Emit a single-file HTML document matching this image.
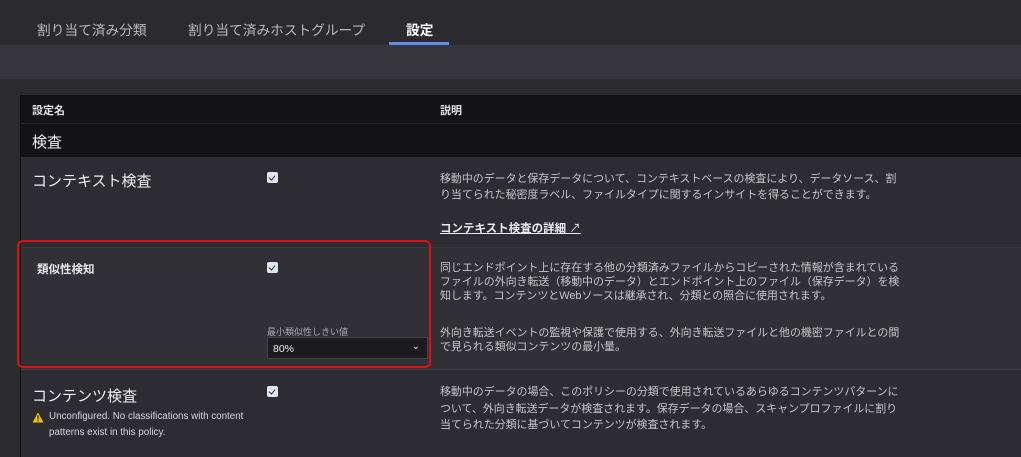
<!DOCTYPE html>
<html><head><meta charset="utf-8"><style>
*{margin:0;padding:0;box-sizing:border-box}
body{width:1021px;height:457px;overflow:hidden;background:#2a2a2f;font-family:"Liberation Sans","Noto Sans CJK JP",sans-serif;color:#d8d8dc;position:relative}
.a{position:absolute;white-space:nowrap}
.tab{font-size:13.7px;color:#b8b8bc;top:19px}
.cb{position:absolute;width:11px;height:11px;background:#dfe6f5;border-radius:2px}
.cb:after{content:"";position:absolute;left:3px;top:2px;width:3px;height:5px;border:solid #2a2a30;border-width:0 1.5px 1.5px 0;transform:rotate(40deg)}
.d{font-size:10.95px;color:#c6c6ca;line-height:16px;white-space:nowrap}
</style></head><body>
<div class="a" style="left:0;top:0;width:1021px;height:45px;background:#2a2a2f"></div>
<div class="a tab" style="left:37px">割り当て済み分類</div>
<div class="a tab" style="left:188px">割り当て済みホストグループ</div>
<div class="a tab" style="left:406px;color:#fff;font-weight:bold">設定</div>
<div class="a" style="left:389px;top:42px;width:60px;height:3px;background:#5b8ef0"></div>
<div class="a" style="left:0;top:45px;width:1021px;height:34px;background:#37363c"></div>
<div class="a" style="left:20px;top:95px;width:1001px;height:62px;background:#131217"></div>
<div class="a" style="left:20px;top:123px;width:1001px;height:1px;background:#26252b"></div>
<div class="a" style="left:32px;top:102px;font-size:11px;color:#e0e0e4;font-weight:bold">設定名</div>
<div class="a" style="left:440px;top:102px;font-size:11px;color:#e0e0e4;font-weight:bold">説明</div>
<div class="a" style="left:32px;top:131px;font-size:15px;color:#eee">検査</div>
<div class="a" style="left:20px;top:157px;width:1001px;height:90px;background:#2d2c32"></div>
<div class="a" style="left:20px;top:247px;width:1001px;height:123px;background:#313036;border-top:1px solid #3a393f;border-bottom:1px solid #444349"></div>
<div class="a" style="left:20px;top:370px;width:1001px;height:87px;background:#2d2c32"></div>
<div class="a" style="left:20px;top:95px;width:1px;height:362px;background:#111"></div>
<div class="a" style="left:32px;top:170px;font-size:15px;color:#eee">コンテキスト検査</div>
<div class="cb" style="left:267px;top:172px"></div>
<div class="a d" style="left:440px;top:171px">移動中のデータと保存データについて、コンテキストベースの検査により、データソース、割<br>り当てられた秘密度ラベル、ファイルタイプに関するインサイトを得ることができます。</div>
<div class="a" style="left:440px;top:220px;font-size:11.5px;color:#e8eaf8;font-weight:bold;text-decoration:underline">コンテキスト検査の詳細 <span style="font-weight:normal">↗</span></div>
<div class="a" style="left:37px;top:261px;font-size:11.5px;color:#e8e8ec;font-weight:bold">類似性検知</div>
<div class="cb" style="left:267px;top:262px"></div>
<div class="a" style="left:267px;top:325px;font-size:9px;color:#a8a8ac">最小類似性しきい値</div>
<div class="a" style="left:267px;top:337px;width:161px;height:22px;background:#1c1b20;border:1px solid #444;font-size:10.5px;color:#e8e8ec;padding:5px 5px">80%<span style="position:absolute;right:7px;top:3px;font-size:10px">⌄</span></div>
<div class="a d" style="left:440px;top:261px;line-height:14px">同じエンドポイント上に存在する他の分類済みファイルからコピーされた情報が含まれている<br>ファイルの外向き転送（移動中のデータ）とエンドポイント上のファイル（保存データ）を検<br>知します。コンテンツとWebソースは継承され、分類との照合に使用されます。</div>
<div class="a d" style="left:440px;top:326px;line-height:14px">外向き転送イベントの監視や保護で使用する、外向き転送ファイルと他の機密ファイルとの間<br>で見られる類似コンテンツの最小量。</div>
<div class="a" style="left:17px;top:240px;width:414px;height:128px;border:2px solid #d11;border-radius:6px"></div>
<div class="a" style="left:32px;top:385px;font-size:15px;color:#eee">コンテンツ検査</div>
<div class="cb" style="left:267px;top:386px"></div>
<svg class="a" style="left:32px;top:412px" width="12" height="11" viewBox="0 0 12 11"><path d="M6 0.5L11.5 10.5H0.5Z" fill="#f2c200"/><rect x="5.4" y="3.5" width="1.2" height="4" fill="#222"/><rect x="5.4" y="8.3" width="1.2" height="1.2" fill="#222"/></svg>
<div class="a" style="left:49px;top:409px;font-size:9.8px;color:#d8d8dc;line-height:16px">Unconfigured. No classifications with content<br>patterns exist in this policy.</div>
<div class="a d" style="left:440px;top:384px;line-height:16.5px">移動中のデータの場合、このポリシーの分類で使用されているあらゆるコンテンツパターンに<br>ついて、外向き転送データが検査されます。保存データの場合、スキャンプロファイルに割り<br>当てられた分類に基づいてコンテンツが検査されます。</div>
</body></html>
